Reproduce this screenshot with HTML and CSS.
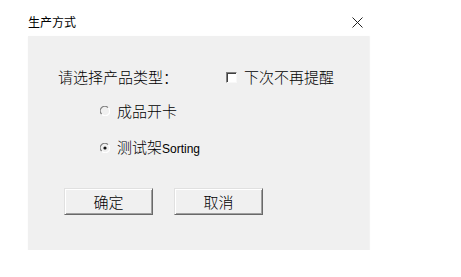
FILE: index.html
```html
<!DOCTYPE html>
<html>
<head>
<meta charset="utf-8">
<link rel="stylesheet" href="styles.css">
</head>
<body>
<div class="window">
  <div class="titlebar">
    <span class="title">生产方式</span>
    <svg class="close" width="11" height="11" viewBox="0 0 11 11"><path d="M0.5 0.5 L10.5 10.5 M10.5 0.5 L0.5 10.5" stroke="#222" stroke-width="1" fill="none"/></svg>
  </div>
  <div class="panel">
    <div class="row row1">
      <span class="label">请选择产品类型：</span>
      <span class="check">
        <span class="box"></span>
        <span>下次不再提醒</span>
      </span>
    </div>
    <div class="row radio-row r2">
      <svg class="radio" width="10" height="10" viewBox="0 0 10 10">
        <path d="M8 1.6 A4.2 4.2 0 0 0 1.6 8" stroke="#808080" stroke-width="1.2" fill="none"/>
        <path d="M8.4 2 A4.2 4.2 0 0 1 2 8.4" stroke="#ffffff" stroke-width="1.2" fill="none"/>
      </svg>
      <span>成品开卡</span>
    </div>
    <div class="row radio-row r3">
      <svg class="radio" width="10" height="10" viewBox="0 0 10 10">
        <path d="M8 1.6 A4.2 4.2 0 0 0 1.6 8" stroke="#808080" stroke-width="1.2" fill="none"/>
        <path d="M8.4 2 A4.2 4.2 0 0 1 2 8.4" stroke="#ffffff" stroke-width="1.2" fill="none"/>
        <circle cx="5" cy="5" r="1.6" fill="#111"/>
      </svg>
      <span>测试架<span class="latin">Sorting</span></span>
    </div>
    <div class="buttons">
      <div class="btn">确定</div>
      <div class="btn">取消</div>
    </div>
  </div>
</div>
</body>
</html>
```
FILE: styles.css
```css
html, body {
  margin: 0;
  padding: 0;
  background: #ffffff;
}
body {
  font-family: "Noto Sans CJK SC", "Liberation Sans", sans-serif;
  font-weight: 300;
  color: #000;
}
.window {
  width: 341px;
  margin-left: 28px;
}
.titlebar {
  height: 28px;
  padding-top: 8px;
  display: flex;
  align-items: center;
  justify-content: space-between;
}
.title {
  font-size: 12px;
  font-weight: 400;
  line-height: 14px;
}
.close {
  margin-right: 6px;
  display: block;
}
.panel {
  height: 214px;
  box-sizing: border-box;
  background: #f0f0f0;
  box-shadow: 0 1px 1px rgba(0,0,0,0.06), 1px 0 1px rgba(0,0,0,0.04);
  padding-top: 30px;
  display: flex;
  flex-direction: column;
}
.row {
  height: 22px;
  display: flex;
  align-items: center;
  font-size: 15px;
  line-height: 22px;
}
.row1 {
  padding-left: 30px;
}
.label {
  width: 168px;
  flex: none;
}
.check {
  display: flex;
  align-items: center;
}
.box {
  width: 9px;
  height: 9px;
  background: #fff;
  border-top: 1px solid #808080;
  border-left: 1px solid #808080;
  border-right: 1px solid #f8f8f8;
  border-bottom: 1px solid #f8f8f8;
  box-shadow: inset 1px 1px 0 #404040;
  margin-right: 7px;
}
.radio-row {
  padding-left: 72px;
}
.radio {
  display: block;
  margin-right: 7px;
}
.r2 {
  margin-top: 12px;
}
.r3 {
  margin-top: 15px;
}
.latin {
  font-family: "Liberation Sans", sans-serif;
  font-weight: 400;
  font-size: 12px;
}
.buttons {
  margin-top: 29px;
  padding-left: 36px;
  display: flex;
  gap: 21px;
}
.btn {
  width: 89px;
  height: 27px;
  box-sizing: border-box;
  display: flex;
  align-items: center;
  justify-content: center;
  font-size: 15px;
  background: #f0f0f0;
  border-top: 1px solid #e0e0e0;
  border-left: 1px solid #e0e0e0;
  border-right: 1px solid #696969;
  border-bottom: 1px solid #696969;
  box-shadow: inset 1px 1px 0 #ffffff, inset -1px -1px 0 #a0a0a0;
}
```
